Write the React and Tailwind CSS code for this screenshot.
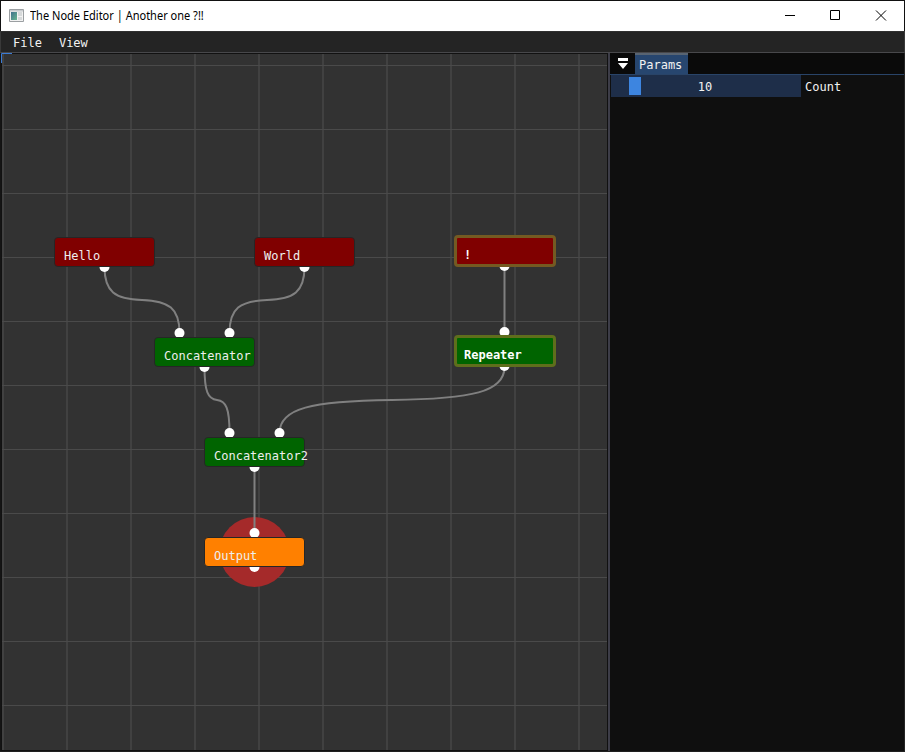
import React from "react";

const MONO = "font-['DejaVu_Sans_Mono','Liberation_Mono',monospace]";

const verticals = [3, 67, 131, 195, 259, 323, 387, 451, 515, 579];
const horizontals = [65, 129, 193, 257, 321, 385, 449, 513, 577, 641, 705];

const links = [
  [104.5, 267, 179.5, 333],
  [304.5, 267, 229.5, 333],
  [504.5, 267, 504.5, 333],
  [204.5, 367, 229.5, 433],
  [504.5, 367, 279.5, 433],
  [254.5, 467, 254.5, 533],
];

const pins = [
  [104.5, 267], [304.5, 267], [504.5, 266],
  [179.5, 333], [229.5, 333], [504.5, 332],
  [204.5, 367], [504.5, 366],
  [229.5, 433], [279.5, 433], [254.5, 467],
  [254.5, 533], [254.5, 567],
];

const nodes = [
  { label: "Hello", style: "left-[52px] top-[183px] bg-[#800000]" },
  { label: "World", style: "left-[252px] top-[183px] bg-[#800000]" },
  { label: "!", selected: true, style: "left-[451.5px] top-[181px] bg-[#800000] border-[#745a22]" },
  { label: "Concatenator", style: "left-[152px] top-[283px] bg-[#006400]" },
  { label: "Repeater", selected: true, style: "left-[451.5px] top-[281px] bg-[#006400] border-[#5f6e1c]" },
  { label: "Concatenator2", style: "left-[202px] top-[383px] bg-[#006400]" },
  { label: "Output", style: "left-[202px] top-[483px] bg-[#ff8000]" },
];

// Two mirrored arcs that meet halfway between the pins.
function linkPath([x1, y1, x2, y2]) {
  const dx = (x2 - x1) / 2;
  const dy = (y2 - y1) / 2;
  const mx = x1 + dx;
  const my = y1 + dy;
  return (
    `M${x1} ${y1}C${x1} ${y1 + dy * 0.75} ${x1 + dx * 0.28} ${my - 1} ${mx} ${my}` +
    `C${x2 - dx * 0.28} ${my + 1} ${x2} ${y2 - dy * 0.75} ${x2} ${y2}`
  );
}

function Node({ label, selected, style }) {
  const frame = selected
    ? "w-[102px] h-8 border-[3px] rounded-[4px] pl-[7.5px] pt-[10px] font-bold text-white"
    : "w-[101px] h-[30px] border border-[#262626] rounded-[4px] pl-[9px] pt-[11px] text-[#eeeeee]";
  return (
    <div className={`absolute whitespace-nowrap text-[12px] leading-[14px] ${frame} ${style}`}>
      {label}
    </div>
  );
}

function Canvas() {
  return (
    <div className="relative mt-px ml-[2px] h-[696px] w-[605px] shrink-0 overflow-hidden bg-[#323232]">
      <svg className="absolute inset-0" width="606" height="697" viewBox="2 54 606 697">
        {verticals.map((x) => (
          <path key={x} d={`M${x} 54V751`} stroke="#414141" strokeWidth="2" />
        ))}
        {horizontals.map((y) => (
          <path key={y} d={`M2 ${y + 0.5}H608`} stroke="#4a4a4a" />
        ))}
        <circle cx="254.5" cy="552" r="35" fill="#a52a2a" />
        {links.map((link) => (
          <path key={link.join("-")} d={linkPath(link)} fill="none" stroke="#808080" strokeWidth="2" />
        ))}
        {pins.map(([x, y]) => (
          <circle key={`${x}-${y}`} cx={x} cy={y} r="5" fill="#fff" />
        ))}
      </svg>
      {nodes.map((node) => (
        <Node key={node.label} {...node} />
      ))}
    </div>
  );
}

function TitleBar() {
  return (
    <header className="flex h-[31px] shrink-0 items-center border-t border-l border-r border-[#111] bg-white pl-[8px] text-black">
      <svg width="15" height="13" viewBox="0 0 15 13" className="shrink-0 -translate-y-px">
        <defs>
          <linearGradient id="screen" x1="0" y1="0" x2="1" y2="1">
            <stop offset="0" stopColor="#3f718d" />
            <stop offset="1" stopColor="#67b58f" />
          </linearGradient>
        </defs>
        <path d="M.5.5h14v12H.5z" fill="#f2f2f2" stroke="#9b9fa2" />
        <path d="M1 1h13v1.5H1z" fill="#c7cbce" />
        <path d="M2 3h6v8H2z" fill="url(#screen)" />
        <path d="M9 3h4v4H9zM9 8h4v3H9z" fill="#d6d9da" />
      </svg>
      <span className="ml-[6px] flex-1 whitespace-nowrap font-['Noto_Sans','Open_Sans',sans-serif] text-[12px] leading-4">
        <span className="inline-block origin-left scale-x-[0.918]">The Node Editor | Another one ?!!</span>
      </span>
      <svg width="119" height="30" viewBox="785 1 119 30" fill="none" stroke="#000">
        <path d="M785 15.5h10M830.5 10.5h9v9h-9zM876 10.5l10 10M886 10.5l-10 10" />
      </svg>
    </header>
  );
}

function MenuBar() {
  return (
    <nav className="flex h-[22px] shrink-0 items-center gap-[17px] border-t border-b border-l border-r border-t-[#303030] border-r-[#393939] border-b-[#48484b] border-l-[#393939] bg-[#242424] pt-px pl-3 text-[12px] text-[#f2f2f2]">
      <span>File</span>
      <span>View</span>
    </nav>
  );
}

function Params() {
  return (
    <aside className="flex min-w-0 flex-1 flex-col border-l-2 border-[#3d3d48] bg-[#0f0f0f]">
      <div className="flex h-[22px] border-b border-[#294468] bg-[#0a0a0a]">
        <svg width="25" height="21" viewBox="0 0 25 21" fill="#fff">
          <path d="M8 5h10v3H8zM8 10h10l-5 6z" />
        </svg>
        <div className="flex h-[21px] w-[53px] items-center border-t-2 border-[#586472] bg-[#27466f] pl-1 text-[12px] text-[#f2f2f2]">
          Params
        </div>
      </div>
      <div className="flex h-[22px] items-center pl-px text-[12px] text-[#f2f2f2]">
        <div className="grid h-full w-[190px] items-center bg-[#1e2e49] text-center">
          <div className="col-start-1 row-start-1 ml-[18px] h-[18px] w-3 bg-[#3d85e0]" />
          <span className="col-start-1 row-start-1 pt-px pr-[2px]">10</span>
        </div>
        <span className="ml-1 pt-px">Count</span>
      </div>
    </aside>
  );
}

export default function App() {
  return (
    <div className={`flex h-[752px] w-[905px] flex-col overflow-hidden bg-[#111] ${MONO}`}>
      <TitleBar />
      <MenuBar />
      <main className="relative flex min-h-0 flex-1 border-r border-l border-r-[#252525] border-l-[#141414]">
        <div className="-ml-px flex w-[608px] shrink-0">
          <Canvas />
        </div>
        <Params />
        <svg className="absolute top-0 left-0" width="11" height="10" fill="none" stroke="#3a7bd5">
          <path d="M.5 10V.5H11" />
        </svg>
      </main>
      <div className="h-px shrink-0 bg-[#202020]" />
    </div>
  );
}
